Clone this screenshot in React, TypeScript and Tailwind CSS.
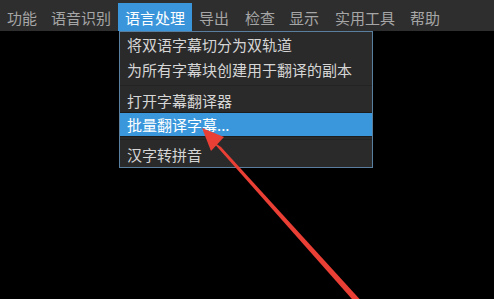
import React from 'react';

const menus = [
  { label: '功能', cls: '' },
  { label: '语音识别', cls: '' },
  { label: '语言处理', cls: '' },
  { label: '导出', cls: '' },
  { label: '检查', cls: 'ml-[2px]' },
  { label: '显示', cls: '' },
  { label: '实用工具', cls: 'ml-[2px]' },
  { label: '帮助', cls: 'ml-[1px]' },
];

const Sep: React.FC<{ h: string }> = ({ h }) => (
  <div className={`${h} flex items-center`}>
    <div className="h-px w-full bg-[#232323]" />
  </div>
);

const App: React.FC = () => {
  return (
    <div
      className="relative w-[494px] h-[299px] overflow-hidden bg-black"
      style={{ fontFamily: '"Noto Sans CJK SC", "Noto Sans", sans-serif' }}
    >
      {/* menu bar */}
      <div className="h-[31px] bg-[#2e2e2e] flex items-end">
        {menus.map((m) => (
          <div
            key={m.label}
            className={`h-[28px] px-[7px] flex items-center text-[15px] leading-none ${m.cls} ${
              m.label === '语言处理' ? 'bg-[#3a95da] text-white' : 'text-[#a6a6a6]'
            }`}
          >
            {m.label}
          </div>
        ))}
      </div>

      {/* dropdown */}
      <div className="absolute left-[119px] top-[31px] w-[254px] border border-[#5a7e9e] bg-[#2a2a2a] text-[15px] leading-none text-[#d6d6d6]">
        <div className="h-[25px] pl-[7px] flex items-center">将双语字幕切分为双轨道</div>
        <div className="h-[25px] pl-[7px] flex items-center">为所有字幕块创建用于翻译的副本</div>
        <Sep h="h-[6px]" />
        <div className="h-[24px] pl-[7px] flex items-center">打开字幕翻译器</div>
        <div className="h-[25px] pl-[7px] flex items-center bg-[#3a97db] text-white border-y border-[#1c1c1c]">
          批量翻译字幕...
        </div>
        <Sep h="h-[5px]" />
        <div className="h-[25px] pl-[7px] flex items-center">汉字转拼音</div>
      </div>

      {/* red arrow */}
      <svg className="absolute left-0 top-0 pointer-events-none" width="494" height="299" viewBox="0 0 494 299">
        <polygon points="202,128 224,137 211,151" fill="#ea3f35" />
        <polygon points="212,141 221,147 365,305 359,307" fill="#ea3f35" />
      </svg>
    </div>
  );
};

export default App;
